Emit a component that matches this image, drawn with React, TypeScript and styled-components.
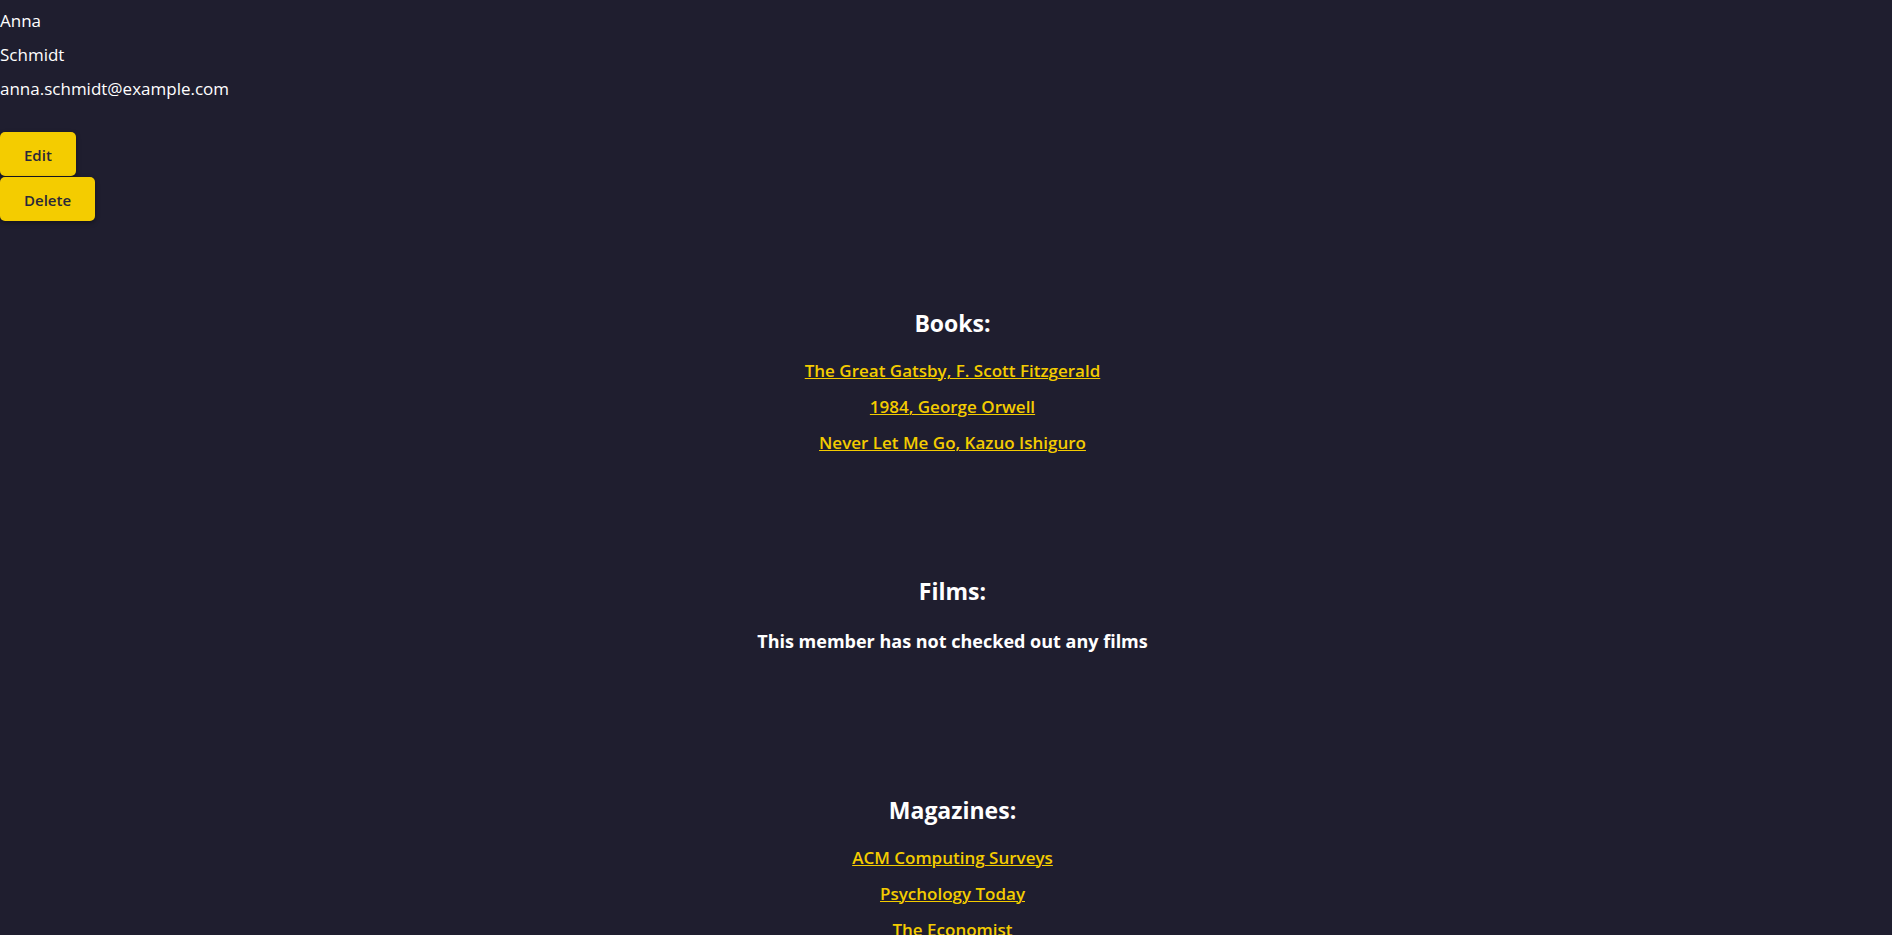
import React from "react";
import styled, { createGlobalStyle } from "styled-components";

const GlobalStyle = createGlobalStyle`
  html, body {
    margin: 0;
    padding: 0;
    background: #1f1e2f;
  }
  body {
    font-family: "Open Sans", "Noto Sans", sans-serif;
    color: #ffffff;
  }
`;

const Page = styled.div`
  min-height: 935px;
  background: #1f1e2f;
  display: flex;
  flex-direction: column;
  padding-top: 9px;
  box-sizing: border-box;
`;

const Profile = styled.div`
  display: flex;
  flex-direction: column;
  align-items: flex-start;
`;

const InfoList = styled.div`
  display: flex;
  flex-direction: column;
  gap: 10px;
`;

const InfoLine = styled.div`
  font-size: 17px;
  line-height: 24px;
  color: #ffffff;
`;

const Actions = styled.div`
  display: flex;
  flex-direction: column;
  align-items: flex-start;
  gap: 1px;
  margin-top: 31px;
`;

const ActionButton = styled.button`
  height: 44px;
  padding: 2px 24px 0;
  box-sizing: border-box;
  border: none;
  border-radius: 5px;
  background: #f4cc00;
  color: #29283a;
  font-family: "Open Sans", "Noto Sans", sans-serif;
  font-size: 15px;
  font-weight: 600;
  line-height: 42px;
  box-shadow: 0 2px 5px rgba(0, 0, 0, 0.35);
  cursor: pointer;
`;

const Collections = styled.div`
  display: flex;
  flex-direction: column;
  align-items: center;
  padding-left: 13px;
`;

const Section = styled.section<{ $offset: number }>`
  display: flex;
  flex-direction: column;
  align-items: center;
  margin-top: ${(p) => p.$offset}px;
`;

const Heading = styled.h2`
  margin: 0;
  font-size: 23px;
  line-height: 32px;
  font-weight: 700;
  color: #ffffff;
`;

const ItemList = styled.ul`
  list-style: none;
  margin: 20px 0 0;
  padding: 0;
  display: flex;
  flex-direction: column;
  align-items: center;
  gap: 12px;
`;

const Item = styled.li`
  font-size: 17px;
  line-height: 24px;
  font-weight: 600;
`;

const ItemLink = styled.a`
  color: #f4cc00;
  text-decoration: underline;
  text-decoration-thickness: 1px;
`;

const EmptyNote = styled.p`
  margin: 22px 0 0;
  font-size: 18px;
  line-height: 24px;
  font-weight: 700;
  color: #ffffff;
`;

type Collection = {
  title: string;
  offset: number;
  items: string[];
  empty: string;
};

const collections: Collection[] = [
  {
    title: "Books:",
    offset: 86,
    items: [
      "The Great Gatsby, F. Scott Fitzgerald",
      "1984, George Orwell",
      "Never Let Me Go, Kazuo Ishiguro",
    ],
    empty: "This member has not checked out any books",
  },
  {
    title: "Films:",
    offset: 120,
    items: [],
    empty: "This member has not checked out any films",
  },
  {
    title: "Magazines:",
    offset: 141,
    items: ["ACM Computing Surveys", "Psychology Today", "The Economist"],
    empty: "This member has not checked out any magazines",
  },
];

export default function App() {
  return (
    <>
      <GlobalStyle />
      <Page>
        <Profile>
          <InfoList>
            <InfoLine>Anna</InfoLine>
            <InfoLine>Schmidt</InfoLine>
            <InfoLine>anna.schmidt@example.com</InfoLine>
          </InfoList>
          <Actions>
            <ActionButton>Edit</ActionButton>
            <ActionButton>Delete</ActionButton>
          </Actions>
        </Profile>
        <Collections>
          {collections.map((c) => (
            <Section key={c.title} $offset={c.offset}>
              <Heading>{c.title}</Heading>
              {c.items.length > 0 ? (
                <ItemList>
                  {c.items.map((it) => (
                    <Item key={it}>
                      <ItemLink href="#">{it}</ItemLink>
                    </Item>
                  ))}
                </ItemList>
              ) : (
                <EmptyNote>{c.empty}</EmptyNote>
              )}
            </Section>
          ))}
        </Collections>
      </Page>
    </>
  );
}
